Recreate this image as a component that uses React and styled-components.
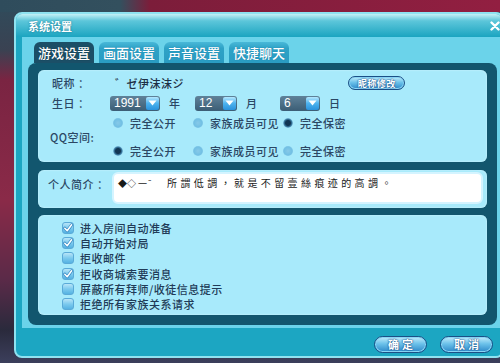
import React from 'react';
import styled, { createGlobalStyle } from 'styled-components';

const GlobalStyle = createGlobalStyle`
  html, body {
    margin: 0;
    padding: 0;
  }
  body {
    font-family: "Noto Sans CJK SC", "Noto Sans", sans-serif;
  }
`;

const Screen = styled.div`
  width: 500px;
  height: 363px;
  overflow: hidden;
  box-sizing: border-box;
  padding: 12px 0 0 14px;
  background:
    linear-gradient(90deg, #2f4c5c 0, #33505e 120px, #7c1d3a 150px, #921f41 100%) top / 100% 12px no-repeat,
    linear-gradient(180deg, #2f4c5c 0, #3a4252 50px, #7a2442 80px, #8a2a48 200px, #5a2a48 280px, #2a2a3c 330px, #3c3f5c 363px);
`;

const Dialog = styled.div`
  width: 490px;
  height: 346px;
  box-sizing: border-box;
  border: 2px solid #8fe2f0;
  border-radius: 8px;
  background: #1ca6c2;
  display: flex;
  flex-direction: column;
  overflow: hidden;
`;

const TitleBar = styled.div`
  height: 23px;
  flex: 0 0 23px;
  display: flex;
  align-items: center;
  justify-content: space-between;
  padding: 0 2px 0 12px;
  background: linear-gradient(180deg, #c4f0f6 0, #5cc6da 30%, #1ba4c0 100%);
`;

const Title = styled.span`
  color: #fff;
  font-size: 11px;
  font-weight: bold;
  text-shadow: 0 0 2px #0d6f88;
`;

const Close = styled.svg`
  width: 10px;
  height: 10px;
`;

const Body = styled.div`
  flex: 1;
  display: flex;
  flex-direction: column;
  padding-left: 6px;
`;

const Inner = styled.div`
  height: 291px;
  box-sizing: border-box;
  background: #6bd3ea;
  padding: 5px 5px 3px 6px;
  display: flex;
  flex-direction: column;
`;

const Tabs = styled.div`
  display: flex;
  gap: 5px;
  height: 21px;
  margin-left: 6px;
`;

const Tab = styled.div`
  height: 21px;
  padding: 0 4px;
  display: flex;
  align-items: center;
  border-radius: 6px 6px 0 0;
  font-size: 13px;
  font-weight: 500;
  color: #fff;
  background: ${p => (p.$active ? '#1b4f67' : 'linear-gradient(180deg, #49b8d8 0, #2ea2c6 30%, #2a9cc2 100%)')};
  text-shadow: 0 0 1px ${p => (p.$active ? '#0b2c3a' : '#1576a0')};
`;

const DarkPanel = styled.div`
  height: 262px;
  box-sizing: border-box;
  background: #12566e;
  border-radius: 8px;
  padding: 7px 10px 10px;
  display: flex;
  flex-direction: column;
`;

const SubPanel = styled.div`
  height: ${p => p.$h}px;
  margin-top: ${p => p.$mt || 0}px;
  box-sizing: border-box;
  background: #a8eafb;
  border-radius: 6px;
  box-shadow: inset 0 0 2px #d6f7ff;
  padding: ${p => p.$pad};
  color: #2b4764;
  font-size: 11px;
  font-weight: 500;
  letter-spacing: 0.5px;
`;

const Row = styled.div`
  display: flex;
  align-items: center;
  height: ${p => p.$h}px;
  margin-top: ${p => p.$mt || 0}px;
`;

const Label = styled.span`
  flex: 0 0 ${p => p.$w}px;
  align-self: ${p => (p.$top ? 'flex-start' : 'auto')};
  margin-top: ${p => (p.$top ? 4 : 0)}px;
`;

const Nick = styled.span`
  flex: 0 0 233px;
  color: #1d2f45;
`;

const PillButton = styled.button`
  width: ${p => p.$w}px;
  height: ${p => p.$h}px;
  padding: 0 0 0 ${p => p.$ls}px;
  border: 1px solid #1b4f86;
  border-radius: 9px;
  background: linear-gradient(180deg, #c2ecfb 0%, #6cc2ea 45%, #2c88c9 100%);
  box-shadow: inset 0 0 0 1px #8ad6f5;
  color: #fff;
  font-family: "Noto Sans CJK SC", sans-serif;
  font-size: ${p => p.$fs}px;
  font-weight: bold;
  letter-spacing: ${p => p.$ls}px;
  line-height: 1;
  text-shadow: 0 0 2px #1b4f86, 0 0 1px #1b4f86;
  display: flex;
  align-items: center;
  justify-content: center;
`;

const SelectGroup = styled.div`
  flex: 0 0 85px;
  display: flex;
  align-items: center;
  gap: 9px;
`;

const Select = styled.div`
  width: ${p => p.$w}px;
  height: 15px;
  box-sizing: border-box;
  border-radius: 3px;
  background: linear-gradient(180deg, #5f8299 0, #3b5d75 100%);
  display: flex;
  align-items: center;
  justify-content: space-between;
  padding: 0 1px 0 4px;
  color: #fff;
  font-family: "Liberation Sans", Arial, sans-serif;
  font-size: 12px;
  font-weight: normal;
  letter-spacing: 0;
`;

const DropBtn = styled.span`
  width: 13px;
  height: 13px;
  border-radius: 2px;
  background: linear-gradient(180deg, #b4e8ff 0, #4db2ee 50%, #2a92dc 100%);
  display: flex;
  align-items: center;
  justify-content: center;
`;

const QQGrid = styled.div`
  display: grid;
  grid-template-columns: 61px 80px 90px auto;
  grid-template-rows: 14px 14px;
  row-gap: 14px;
  margin-top: 5px;
  align-items: center;
`;

const QQLabel = styled.span`
  grid-row: 1 / span 2;
  margin-left: -2px;
`;

const RadioItem = styled.label`
  display: flex;
  align-items: center;
  gap: 7px;
  white-space: nowrap;
`;

const Radio = styled.span`
  width: 10px;
  height: 10px;
  border-radius: 50%;
  flex: 0 0 10px;
  background: ${p =>
    p.$on
      ? 'radial-gradient(circle, #113553 0, #113553 2.5px, #3d7fa6 4px, #8ccbe8 5px)'
      : 'radial-gradient(circle, #86c9e8 0, #72c0e4 55%, #9cd8f0 100%)'};
`;

const IntroInput = styled.div`
  flex: 1;
  height: 32px;
  box-sizing: border-box;
  background: #fff;
  border: 2px solid #d4f4ff;
  border-radius: 6px;
  padding: 2px 4px;
  color: #1a1a1a;
  font-family: "Noto Sans CJK TC", "Noto Sans CJK SC", sans-serif;
  font-size: 10px;
  font-weight: normal;
  line-height: 14px;
  letter-spacing: 3.4px;
  white-space: nowrap;
`;

const Prefix = styled.span`
  display: inline-block;
  width: 49px;
  letter-spacing: 0;
  font-size: 9px;
`;

const CheckRow = styled.label`
  display: flex;
  align-items: center;
  height: 15.3px;
  gap: 6px;
  color: #213b57;
`;

const Box = styled.span`
  width: 12px;
  height: 12px;
  flex: 0 0 12px;
  box-sizing: border-box;
  border-radius: 3px;
  border: 1px solid #5aaad8;
  background: linear-gradient(180deg, #b8e5f8 0, #7ccaee 50%, #55b2e2 100%);
  display: flex;
  align-items: center;
  justify-content: center;
`;

const Footer = styled.div`
  flex: 1;
  display: flex;
  justify-content: flex-end;
  align-items: flex-start;
  gap: 13px;
  padding: 8px 9px 0 0;
`;

const Triangle = () => (
  <svg width="9" height="6" viewBox="0 0 9 6">
    <polygon points="0.5,0.5 8.5,0.5 4.5,5.5" fill="#fff" />
  </svg>
);

const Check = () => (
  <svg width="10" height="10" viewBox="0 0 10 10">
    <path d="M1.8 5.2 L4.2 7.8 L8.6 1.8" fill="none" stroke="#3a8cc4" strokeWidth="3" strokeLinecap="round" strokeLinejoin="round" />
    <path d="M1.8 5.2 L4.2 7.8 L8.6 1.8" fill="none" stroke="#ffffff" strokeWidth="1.5" strokeLinecap="round" strokeLinejoin="round" />
  </svg>
);

const dates = [
  { value: '1991', unit: '年', w: 50 },
  { value: '12', unit: '月', w: 42 },
  { value: '6', unit: '日', w: 40 },
];

const privacy = ['完全公开', '家族成员可见', '完全保密'];

const options = [
  { text: '进入房间自动准备', on: true },
  { text: '自动开始对局', on: true },
  { text: '拒收邮件', on: false },
  { text: '拒收商城索要消息', on: true },
  { text: '屏蔽所有拜师/收徒信息提示', on: false },
  { text: '拒绝所有家族关系请求', on: false },
];

const RadioRow = ({ selected }) =>
  privacy.map((t, i) => (
    <RadioItem key={t}>
      <Radio $on={i === selected} />
      {t}
    </RadioItem>
  ));

export default function App() {
  return (
    <>
      <GlobalStyle />
      <Screen>
        <Dialog>
          <TitleBar>
            <Title>系统设置</Title>
            <Close viewBox="0 0 10 10">
              <path d="M1.5 1.5 L8.5 8.5 M8.5 1.5 L1.5 8.5" stroke="#fff" strokeWidth="2.4" strokeLinecap="round" />
            </Close>
          </TitleBar>
          <Body>
            <Inner>
              <Tabs>
                <Tab $active>游戏设置</Tab>
                <Tab>画面设置</Tab>
                <Tab>声音设置</Tab>
                <Tab>快捷聊天</Tab>
              </Tabs>
              <DarkPanel>
                <SubPanel $h={92} $pad="6px 0 0 14px">
                  <Row $h={14}>
                    <Label $w={63}>昵称 ：</Label>
                    <Nick>゛ゼ伊沫沫ジ</Nick>
                    <PillButton $w={57} $h={14} $fs={9} $ls={0.5}>昵称修改</PillButton>
                  </Row>
                  <Row $h={16} $mt={5}>
                    <Label $w={58}>生日 ：</Label>
                    {dates.map(d => (
                      <SelectGroup key={d.unit}>
                        <Select $w={d.w}>
                          {d.value}
                          <DropBtn>
                            <Triangle />
                          </DropBtn>
                        </Select>
                        {d.unit}
                      </SelectGroup>
                    ))}
                  </Row>
                  <QQGrid>
                    <QQLabel>QQ空间:</QQLabel>
                    <RadioRow selected={2} />
                    <RadioRow selected={0} />
                  </QQGrid>
                </SubPanel>
                <SubPanel $h={38} $mt={8} $pad="2px 4px 0 10px">
                  <Row $h={32}>
                    <Label $w={64} $top>个人简介 ：</Label>
                    <IntroInput>
                      <Prefix>◆◇ 一¯</Prefix>所謂低調，就是不留壹絲痕迹的高調。
                    </IntroInput>
                  </Row>
                </SubPanel>
                <SubPanel $h={100} $mt={7} $pad="5px 0 0 24px">
                  {options.map(o => (
                    <CheckRow key={o.text}>
                      <Box>{o.on && <Check />}</Box>
                      {o.text}
                    </CheckRow>
                  ))}
                </SubPanel>
              </DarkPanel>
            </Inner>
            <Footer>
              <PillButton $w={53} $h={17} $fs={11} $ls={3}>确定</PillButton>
              <PillButton $w={53} $h={17} $fs={11} $ls={3}>取消</PillButton>
            </Footer>
          </Body>
        </Dialog>
      </Screen>
    </>
  );
}
